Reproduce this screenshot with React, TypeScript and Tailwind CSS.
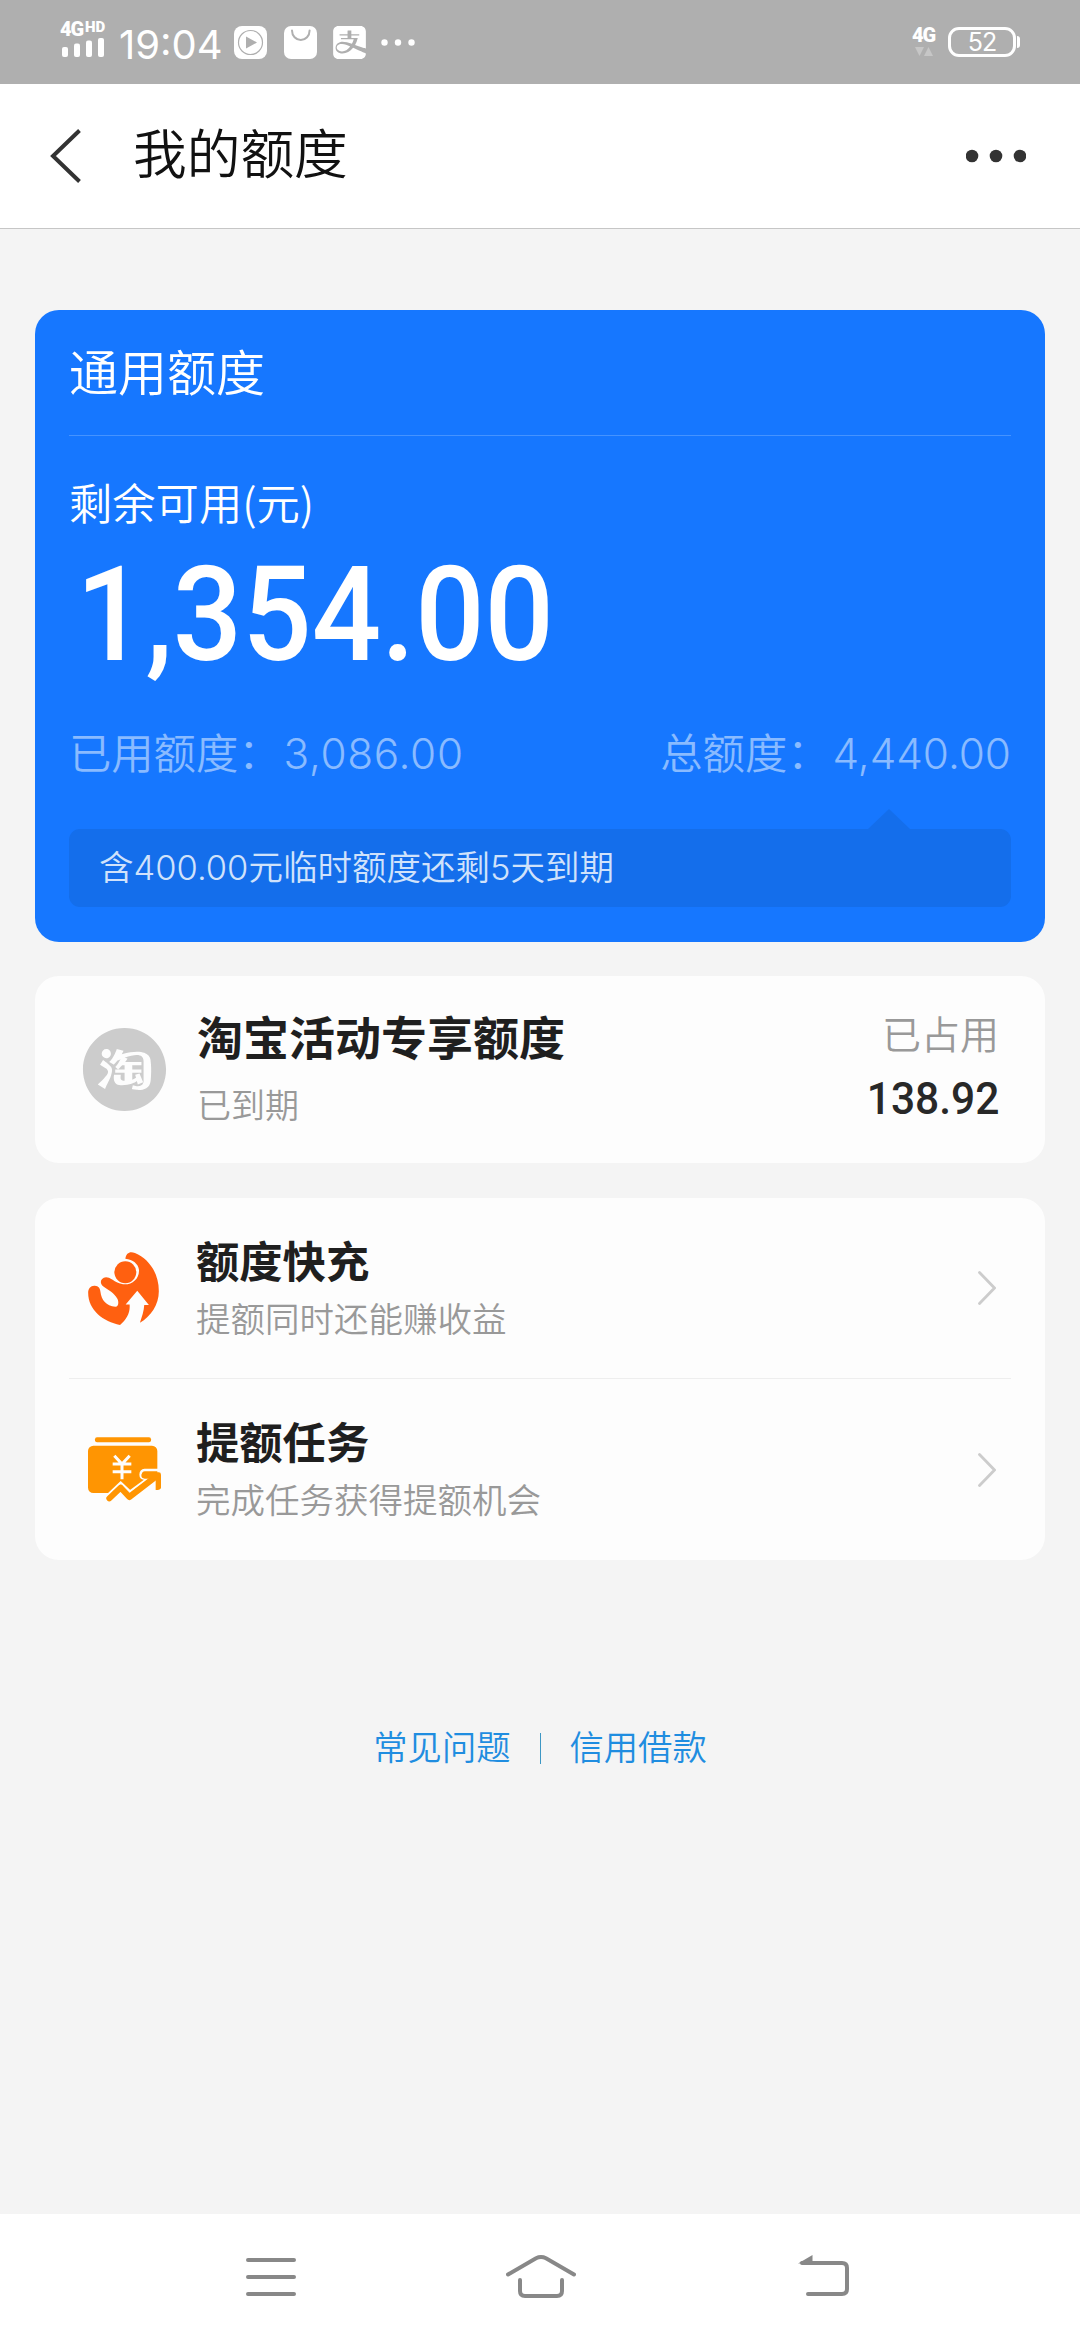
import React from 'react';
import { AiFillTaobaoCircle } from 'react-icons/ai';
import { SiAlipay } from 'react-icons/si';

const StatusBar: React.FC = () => (
  <div className="h-[84px] bg-[#afafaf] flex items-start text-white pl-[60px] pr-[60px]">
    {/* Signal */}
    <div className="w-[48px] mt-[21px]">
      <div className="flex items-start font-['Roboto'] font-black">
        <span className="text-[20px] leading-[17px] tracking-[-1px] w-[25px]">4G</span>
        <span className="text-[15px] leading-[12px]">HD</span>
      </div>
      <svg className="w-[48px] h-[20px] block" viewBox="0 0 48 20" fill="currentColor">
        <rect x="2" y="9" width="6" height="10" rx="2" />
        <rect x="14" y="5.500" width="6" height="13.500" rx="2" />
        <rect x="26" y="2.500" width="6" height="16.500" rx="2" />
        <rect x="38" y="0" width="6" height="19" rx="2" />
      </svg>
    </div>
    <span className="ml-[11px] mt-[21px] w-[107px] font-['Inter'] text-[40px] leading-[48px] whitespace-nowrap">
      19:04
    </span>
    {/* Notifications */}
    <div className="flex items-center gap-[16.500px] mt-[26px] ml-[8px]">
      <svg className="w-[33px] h-[33px]" viewBox="0 0 33 33">
        <rect width="33" height="33" rx="8" fill="white" />
        <circle cx="16.500" cy="16.500" r="12" fill="none" stroke="#afafaf" strokeWidth="1.200" />
        <path d="M12 10.500L23 16.500L12 22.500Z" fill="#afafaf" />
      </svg>
      <svg className="w-[33px] h-[33px]" viewBox="0 0 33 33">
        <rect width="33" height="33" rx="7" fill="white" />
        <path d="M8 4.500a8.800 9.500 0 0 0 17.600 0" fill="none" stroke="#afafaf" strokeWidth="2" strokeLinecap="round" />
      </svg>
      <SiAlipay className="w-[33px] h-[33px]" />
      <svg className="w-[34px] h-[7px] -ml-[2px]" viewBox="0 0 34 7" fill="white">
        <circle cx="3.500" cy="3.500" r="3.200" />
        <circle cx="17" cy="3.500" r="3.200" />
        <circle cx="30.500" cy="3.500" r="3.200" />
      </svg>
    </div>
    {/* Network and battery */}
    <div className="ml-auto w-[27px] mt-[26px]">
      <div className="font-['Roboto'] font-black text-[20px] leading-[18px] tracking-[-1px]">4G</div>
      <svg className="w-[27px] h-[14px] block" viewBox="0 0 27 14" fill="#c6c6c6">
        <path d="M3 3h9l-4.500 9z" />
        <path d="M12 12h9l-4.500 -9z" />
      </svg>
    </div>
    <div className="ml-[9px] mt-[27px] flex items-center">
      <div className="w-[68px] h-[30px] border-[3px] border-white rounded-[11px] font-['Inter'] text-[25px] leading-[25px] text-center tracking-[-1px]">
        52
      </div>
      <div className="w-[3px] h-[12px] ml-[1px] bg-white rounded-r-[3px]" />
    </div>
  </div>
);

const Header: React.FC = () => (
  <div className="h-[145px] bg-white border-b border-[#c6c6c6] flex items-center pl-[50px] pr-[54px]">
    <svg className="w-[32px] h-[54px]" viewBox="0 0 32 54" fill="none">
      <path d="M29.500 1.500L3 27L29.500 52.500" stroke="#333333" strokeWidth="4" />
    </svg>
    <h1 className="ml-[51px] pb-[10px] text-[53.700px] leading-[64px] font-[350] text-[#111111]">我的额度</h1>
    <svg className="ml-auto w-[60px] h-[14px]" viewBox="0 0 60 14" fill="#333333">
      <circle cx="6" cy="7" r="6.300" />
      <circle cx="30" cy="7" r="6.300" />
      <circle cx="54" cy="7" r="6.300" />
    </svg>
  </div>
);

const CreditCard: React.FC = () => (
  <div className="h-[632px] bg-[#1677ff] rounded-[24px] px-[34px] text-white font-[350]">
    <div className="h-[126px] border-b border-[#4593ff] pb-[6px] flex items-center text-[49px]">通用额度</div>
    <div className="mt-[35px] text-[43.300px] leading-[60px]">剩余可用(元)</div>
    <div className="mt-[29px] h-[110px] pl-[7px] font-['Roboto'] font-medium text-[131px] leading-[110px] whitespace-nowrap">
      <span className="inline-block origin-left scale-x-[0.933]">1,354.00</span>
    </div>
    <div className="mt-[54px] flex justify-between text-[42.300px] leading-[60px] text-white/50 font-['Inter','Noto_Sans_CJK_SC',sans-serif]">
      <span>
        已用额度：<span className="ml-[3px] tracking-[0.700px]">3,086.00</span>
      </span>
      <span>
        总额度：<span className="ml-[3px]">4,440.00</span>
      </span>
    </div>
    <div className="relative mt-[45px] h-[78px] rounded-[11px] bg-[#146eeb] pl-[30px] flex items-center text-[34.500px] text-[#d0e2fb] font-['Inter','Noto_Sans_CJK_SC',sans-serif]">
      <svg className="absolute left-[799px] -top-[20px] w-[42px] h-[20px]" viewBox="0 0 42 20" fill="#146eeb">
        <path d="M21 0L42 20H0Z" />
      </svg>
      含400.00元临时额度还剩5天到期
    </div>
  </div>
);

const BoostIcon: React.FC = () => (
  <svg className="w-[71px] h-[73px]" viewBox="84 186 213 220">
    <g fill="#ff6010">
      <path d="M196 206C199 188 210 183 225 189C268 207 297 250 297 304C297 345 273 380 240 399C246 382 252 364 253 346H267L232 303L197 344H209C211 370 200 388 180 406C130 396 84 362 84 309C84 296 92 287 104 288C116 289 120 296 121 306C124 331 138 349 166 351C177 351 176 334 172 327C163 311 145 300 131 291C117 281 120 264 138 262C150 262 160 272 172 278C205 294 240 272 237 239C235 221 219 209 196 206Z" />
      <circle cx="196" cy="247" r="33" />
    </g>
  </svg>
);

const TaskIcon: React.FC = () => (
  <svg className="w-[73px] h-[65px]" viewBox="84 741 219 195">
    <rect x="105" y="742" width="168" height="15" rx="6" fill="#ff9502" />
    <rect x="84" y="767" width="208" height="142" rx="16" fill="#ff9502" />
    <path d="M163 797L186 822L209 797M158 822H214M158 845H214M186 822V868" fill="none" stroke="#fdfdfd" strokeWidth="9" />
    <path d="M130 927L182 878L210 904L262 866H252C238 864 238 842 254 840H300V905" fill="none" stroke="#fdfdfd" strokeWidth="7" />
    <path d="M130 940L182 882L210 908L290 850L303 936Z" fill="#fdfdfd" />
    <path d="M148 925L182 893L208 921L282 864" fill="none" stroke="#ff9502" strokeWidth="18" strokeLinecap="round" strokeLinejoin="round" />
    <path d="M254 847H296Q303 847 303 854V893Q302 900 287 900V868L270 866H254Q244 864 244 857Q245 848 254 847Z" fill="#ff9502" />
  </svg>
);

interface Entry {
  title: string;
  desc: string;
  icon: React.ComponentType;
}

const entries: Entry[] = [
  { title: '额度快充', desc: '提额同时还能赚收益', icon: BoostIcon },
  { title: '提额任务', desc: '完成任务获得提额机会', icon: TaskIcon },
];

const NavBar: React.FC = () => (
  <div className="mt-auto h-[126px] bg-white flex items-start pl-[246px] pt-[40px]">
    <svg className="w-[50px] h-[46px]" viewBox="0 0 50 46" stroke="#888888" strokeWidth="4" strokeLinecap="round">
      <path d="M2 6H48M2 23H48M2 40H48" />
    </svg>
    <svg className="ml-[210px] w-[70px] h-[46px]" viewBox="0 0 70 46" fill="none" stroke="#888888" strokeWidth="4" strokeLinecap="round">
      <path d="M2 20.500L30 4.200Q35 1.800 40 4.200L68 20.500" />
      <path d="M14 26V37Q14 42 19 42H51Q56 42 56 37V26" />
    </svg>
    <svg className="ml-[222px] w-[52px] h-[46px]" viewBox="0 0 52 46" fill="none" stroke="#888888" strokeWidth="4" strokeLinecap="round">
      <path d="M4 9H44Q49 9 49 14V35Q49 40 44 40H10" />
      <path d="M0 9.500L14.500 1V9Z" fill="#888888" stroke="none" />
    </svg>
  </div>
);

const App: React.FC = () => {
  return (
    <div className="w-[1080px] h-[2340px] bg-[#f4f4f4] flex flex-col overflow-hidden font-['Noto_Sans_CJK_SC',sans-serif]">
      <StatusBar />
      <Header />

      <div className="px-[35px] pt-[81px] flex flex-col">
        <CreditCard />

        {/* Taobao quota */}
        <div className="mt-[34px] h-[187px] bg-[#fdfdfd] rounded-[24px] pl-[48px] pr-[46px] flex">
          <div className="w-[83px] h-[83px] mt-[52px] flex items-center justify-center">
            <AiFillTaobaoCircle className="w-[95px] h-[95px] shrink-0 text-[#cccccc]" />
          </div>
          <div className="ml-[31px] pt-[29px]">
            <div className="text-[46px] leading-[60px] font-bold text-[#1f1f1f]">淘宝活动专享额度</div>
            <div className="mt-[15px] text-[34px] leading-[48px] font-[350] text-[#999999]">已到期</div>
          </div>
          <div className="ml-auto pt-[27px] text-right">
            <div className="text-[39px] leading-[58px] font-[350] text-[#999999]">已占用</div>
            <div className="mt-[13px] font-['Roboto'] font-medium text-[45px] leading-[50px] text-[#282828]">
              <span className="inline-block origin-right scale-x-[0.945]">138.92</span>
            </div>
          </div>
        </div>

        {/* Entries */}
        <div className="mt-[35px] h-[362px] bg-[#fdfdfd] rounded-[24px] px-[34px]">
          {entries.map((entry) => {
            const Icon = entry.icon;

            return (
              <div
                key={entry.title}
                className="h-[181px] pl-[19px] pr-[15px] flex items-center border-b border-[#eeeeee] last:border-b-0"
              >
                <div className="w-[108px] flex">
                  <Icon />
                </div>
                <div className="pb-[3px]">
                  <div className="text-[43.300px] leading-[60px] font-bold text-[#1f1f1f]">{entry.title}</div>
                  <div className="text-[34.500px] leading-[56px] font-[350] text-[#999999]">{entry.desc}</div>
                </div>
                <svg className="ml-auto w-[18px] h-[34px]" viewBox="0 0 18 34" fill="none">
                  <path d="M1.500 1.500L16.500 17L1.500 32.500" stroke="#cccccc" strokeWidth="2.800" strokeLinecap="round" />
                </svg>
              </div>
            );
          })}
        </div>

        {/* Links */}
        <div className="mt-[160px] flex justify-center items-center text-[34.300px] leading-[50px] font-[350] text-[#1f8de0]">
          <span>常见问题</span>
          <span className="mx-[29px] mt-[6px] w-[1px] h-[31px] bg-[#3d97c4]" />
          <span>信用借款</span>
        </div>
      </div>

      <NavBar />
    </div>
  );
};

export default App;
